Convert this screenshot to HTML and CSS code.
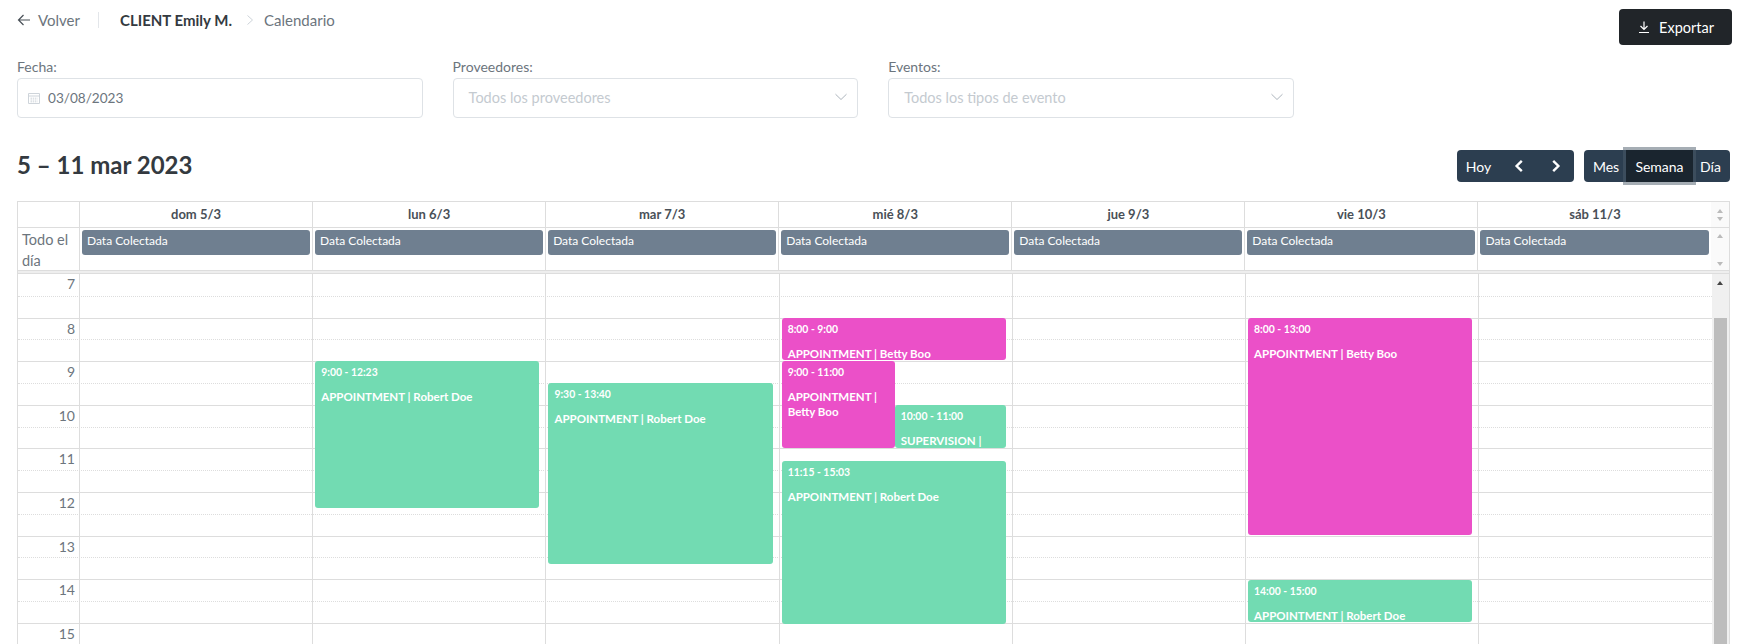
FILE: index.html
```html
<!DOCTYPE html>
<html lang="es">
<head>
<meta charset="utf-8">
<title>Calendario</title>
<link rel="stylesheet" href="styles.css">
</head>
<body>
<div class="page">
  <header class="topbar">
    <nav class="crumbs">
      <a class="back">
        <svg class="back-icon" viewBox="0 0 14 14" width="14" height="14"><path d="M13 7H1.5M6.5 2 1.5 7l5 5" fill="none" stroke="#495057" stroke-width="1.2"/></svg>
        Volver
      </a>
      <span class="crumb-sep"></span>
      <strong class="client">CLIENT Emily M.</strong>
      <svg class="chev" viewBox="0 0 8 12" width="8" height="12"><path d="M1.5 1.5 6.5 6l-5 4.5" fill="none" stroke="#ced4da" stroke-width="1"/></svg>
      <span class="crumb-page">Calendario</span>
    </nav>
    <button class="export">
      <svg viewBox="0 0 14 14" width="14" height="14"><path d="M7 1.5v7.5M3.5 6 7 9.5 10.5 6M2 12.5h10" fill="none" stroke="#fff" stroke-width="1.2"/></svg>
      Exportar
    </button>
  </header>

  <section class="filters">
    <div class="field">
      <label class="field-label">Fecha:</label>
      <div class="input">
        <svg class="cal-icon" viewBox="0 0 14 14" width="14" height="14"><path d="M1.5 2.5h11v10h-11zM1.5 5h11" fill="none" stroke="#ced4da" stroke-width="1"/><path d="M3.5 7.2h7M3.5 9h7M3.5 10.8h7" fill="none" stroke="#ced4da" stroke-width="1" stroke-dasharray="1.5 .7"/></svg>
        <span class="date-value">03/08/2023</span>
      </div>
    </div>
    <div class="field">
      <label class="field-label">Proveedores:</label>
      <div class="input select">
        <span class="placeholder">Todos los proveedores</span>
        <svg viewBox="0 0 14 8" width="14" height="8"><path d="M1.5 1.2 7 6.5l5.5-5.3" fill="none" stroke="#adb5bd" stroke-width="1"/></svg>
      </div>
    </div>
    <div class="field">
      <label class="field-label">Eventos:</label>
      <div class="input select">
        <span class="placeholder">Todos los tipos de evento</span>
        <svg viewBox="0 0 14 8" width="14" height="8"><path d="M1.5 1.2 7 6.5l5.5-5.3" fill="none" stroke="#adb5bd" stroke-width="1"/></svg>
      </div>
    </div>
  </section>

  <section class="toolbar">
    <h2 class="range">5 – 11 mar 2023</h2>
    <div class="tools">
      <div class="btn-group">
        <button class="btn btn-today">Hoy</button>
        <button class="btn icon-btn"><svg viewBox="0 0 10 14" width="10" height="14"><path d="M7.8 1.8 2.6 7l5.2 5.2" fill="none" stroke="#fff" stroke-width="2.4"/></svg></button>
        <button class="btn icon-btn"><svg viewBox="0 0 10 14" width="10" height="14"><path d="M2.2 1.8 7.4 7l-5.2 5.2" fill="none" stroke="#fff" stroke-width="2.4"/></svg></button>
      </div>
      <div class="btn-group">
        <button class="btn btn-month">Mes</button>
        <button class="btn btn-week active">Semana</button>
        <button class="btn btn-day">Día</button>
      </div>
    </div>
  </section>

  <section class="calendar">
    <div class="cal-row head-row">
      <div class="axis"></div>
      <div class="day-head">dom 5/3</div>
      <div class="day-head">lun 6/3</div>
      <div class="day-head">mar 7/3</div>
      <div class="day-head">mié 8/3</div>
      <div class="day-head">jue 9/3</div>
      <div class="day-head">vie 10/3</div>
      <div class="day-head">sáb 11/3</div>
      <div class="mini-scroll"><i class="arrow up"></i><i class="arrow down"></i></div>
    </div>
    <div class="cal-row allday-row">
      <div class="axis allday-label">Todo el día</div>
      <div class="allday-cell"><div class="allday-event">Data Colectada</div></div>
      <div class="allday-cell"><div class="allday-event">Data Colectada</div></div>
      <div class="allday-cell"><div class="allday-event">Data Colectada</div></div>
      <div class="allday-cell"><div class="allday-event">Data Colectada</div></div>
      <div class="allday-cell"><div class="allday-event">Data Colectada</div></div>
      <div class="allday-cell"><div class="allday-event">Data Colectada</div></div>
      <div class="allday-cell"><div class="allday-event">Data Colectada</div></div>
      <div class="mini-scroll spread"><i class="arrow up"></i><i class="arrow down"></i></div>
    </div>
    <div class="divider"></div>
    <div class="body">
      <div class="time-area">
        <div class="slots">
          <div class="slot"><span>7</span></div><div class="slot minor"></div>
          <div class="slot"><span>8</span></div><div class="slot minor"></div>
          <div class="slot"><span>9</span></div><div class="slot minor"></div>
          <div class="slot"><span>10</span></div><div class="slot minor"></div>
          <div class="slot"><span>11</span></div><div class="slot minor"></div>
          <div class="slot"><span>12</span></div><div class="slot minor"></div>
          <div class="slot"><span>13</span></div><div class="slot minor"></div>
          <div class="slot"><span>14</span></div><div class="slot minor"></div>
          <div class="slot"><span>15</span></div><div class="slot minor"></div>
        </div>
        <div class="day-columns">
          <div class="day-col"></div>
          <div class="day-col">
            <div class="event green" style="top:87.2px;height:147px;left:2px;right:6px"><div class="ev-time">9:00 - 12:23</div><div class="ev-title">APPOINTMENT | Robert Doe</div></div>
          </div>
          <div class="day-col">
            <div class="event green" style="top:109px;height:181px;left:2px;right:6px"><div class="ev-time">9:30 - 13:40</div><div class="ev-title">APPOINTMENT | Robert Doe</div></div>
          </div>
          <div class="day-col">
            <div class="event pink" style="top:44px;height:42px;left:2px;right:6px"><div class="ev-time">8:00 - 9:00</div><div class="ev-title">APPOINTMENT | Betty Boo</div></div>
            <div class="event pink" style="top:87.2px;height:87px;left:2px;width:113px"><div class="ev-time">9:00 - 11:00</div><div class="ev-title">APPOINTMENT | Betty Boo</div></div>
            <div class="event green" style="top:131px;height:43px;left:115px;right:6px"><div class="ev-time">10:00 - 11:00</div><div class="ev-title">SUPERVISION |</div></div>
            <div class="event green" style="top:187px;height:163px;left:2px;right:6px"><div class="ev-time">11:15 - 15:03</div><div class="ev-title">APPOINTMENT | Robert Doe</div></div>
          </div>
          <div class="day-col"></div>
          <div class="day-col">
            <div class="event pink" style="top:44px;height:217px;left:2px;right:6px"><div class="ev-time">8:00 - 13:00</div><div class="ev-title">APPOINTMENT | Betty Boo</div></div>
            <div class="event green" style="top:306px;height:42px;left:2px;right:6px"><div class="ev-time">14:00 - 15:00</div><div class="ev-title">APPOINTMENT | Robert Doe</div></div>
          </div>
          <div class="day-col"></div>
        </div>
      </div>
      <div class="scrollbar"><i class="arrow up dark"></i><div class="thumb"></div></div>
    </div>
  </section>
</div>
</body>
</html>
```
FILE: styles.css
```css
* { box-sizing: border-box; }
html, body { margin: 0; height: 100%; overflow: hidden; background: #fff; }
body { font-family: "Lato", "Noto Sans", sans-serif; font-size: 14px; color: #495057; }
button { font: inherit; border: 0; cursor: pointer; }

.page { height: 644px; padding: 9px 11px 0 17px; display: flex; flex-direction: column; overflow: hidden; }

.topbar { display: flex; justify-content: space-between; align-items: flex-start; height: 36px; margin-right: 1px; }
.crumbs { display: flex; align-items: center; height: 22px; font-size: 15px; }
.back { display: flex; align-items: center; gap: 7px; color: #6c757d; }
.crumb-sep { width: 1px; height: 16px; background: #e3e6ea; margin: 0 21px 0 18px; }
.client { font-weight: 700; color: #343a40; }
.chev { margin: 0 10px 0 14px; }
.crumb-page { color: #6c757d; }
.export { width: 113px; height: 36px; background: #212529; color: #fff; border-radius: 4px; display: flex; align-items: center; justify-content: center; gap: 8px; font-size: 14.5px; }

.filters { display: flex; gap: 30px; margin-top: 12px; }
.field { width: 405.6px; display: flex; flex-direction: column; gap: 1px; }
.field-label { font-size: 14px; line-height: 20px; color: #6c757d; }
.input { height: 40px; border: 1px solid #dee2e6; border-radius: 4px; display: flex; align-items: center; gap: 7px; padding: 0 9px; color: #6c757d; }
.date-value { font-size: 13.6px; }
.select { justify-content: space-between; padding: 0 9px 2px 15px; }
.placeholder { color: #c4cad0; font-size: 14.5px; }

.toolbar { display: flex; justify-content: space-between; align-items: center; height: 38px; margin-top: 29px; margin-right: 3px; }
.range { margin: 0 0 2px; font-size: 24px; font-weight: 700; color: #343a40; line-height: 34px; }
.tools { display: flex; gap: 10px; }
.btn-group { display: flex; align-items: stretch; height: 32px; background: #2c3e50; border-radius: 4px; }
.btn { background: transparent; color: #fff; padding: 0; height: 32px; display: flex; align-items: center; justify-content: center; }
.btn-today { width: 43px; }
.icon-btn { width: 37px; }
.btn-month { width: 42px; padding-left: 2px; }
.btn-week { width: 67px; }
.btn-day { width: 37px; padding-right: 2px; }
.active { background: #1a252f; outline: 3px solid rgba(76, 91, 106, .5); position: relative; }

.calendar { margin-top: 16px; border: 1px solid #ddd; border-bottom: 0; margin-right: 3px; flex: 1; min-height: 0; display: flex; flex-direction: column; }
.cal-row { display: grid; grid-template-columns: 62px repeat(7, 1fr) 17.5px; }
.head-row { height: 26px; border-bottom: 1px solid #ddd; }
.axis { border-right: 1px solid #ddd; }
.day-head { border-right: 1px solid #ddd; text-align: center; font-weight: 700; font-size: 13px; line-height: 24px; color: #495057; }
.day-head:nth-child(8) { border-right: 0; }
.mini-scroll { background: #fafafa; display: flex; flex-direction: column; align-items: center; justify-content: center; gap: 4px; }
.spread { justify-content: space-between; padding: 6px 0; }
.allday-row { height: 42px; }
.allday-label { font-size: 14.5px; line-height: 21px; padding: 1px 4px; color: #6c757d; }
.allday-cell { border-right: 1px solid #ddd; padding: 2px 2px 0; }
.allday-cell:nth-child(8) { border-right: 0; padding-right: 2px; }
.allday-event { height: 25px; background: #6f7f90; border-radius: 3px; color: #fff; font-size: 12px; line-height: 22px; padding: 0 5px; }
.arrow { display: block; width: 0; height: 0; border-left: 3.5px solid transparent; border-right: 3.5px solid transparent; }
.arrow.up { border-bottom: 4px solid #bbb; }
.arrow.down { border-top: 4px solid #bbb; }
.arrow.dark { border-bottom-color: #444; margin: 7px auto 0; }
.divider { height: 3px; background: #eee; border-top: 1px solid #ddd; }
.body { flex: 1; min-height: 0; display: grid; grid-template-columns: 1fr 17.5px; overflow: hidden; border-top: 1px solid #ddd; }
.time-area { position: relative; overflow: hidden; }
.slot { height: 21.8px; border-top: 1px solid #ddd; display: grid; grid-template-columns: 62px 1fr; }
.slot:first-child { border-top: 0; }
.slot.minor { border-top: 1px dotted #ddd; }
.slot span { text-align: right; padding-right: 5px; line-height: 20px; color: #6c757d; font-size: 14px; }
.day-columns { position: absolute; inset: 0 0 0 62px; display: grid; grid-template-columns: repeat(7, 1fr); margin-left: -1px; }
.day-col { position: relative; border-left: 1px solid #ddd; }
.event { position: absolute; border-radius: 3px; color: #fff; overflow: hidden; padding: 4px 6px 0; }
.green { background: #72dbb2; }
.pink { background: #eb50c8; }
.ev-time { font-size: 10.4px; font-weight: 700; line-height: 14px; }
.ev-title { font-size: 11.5px; font-weight: 700; line-height: 14.4px; margin-top: 11px; }
.scrollbar { background: #f0f0f0; display: flex; flex-direction: column; align-items: center; }
.thumb { width: 13px; height: 400px; background: #bdbdbd; margin-top: 33px; }
```
